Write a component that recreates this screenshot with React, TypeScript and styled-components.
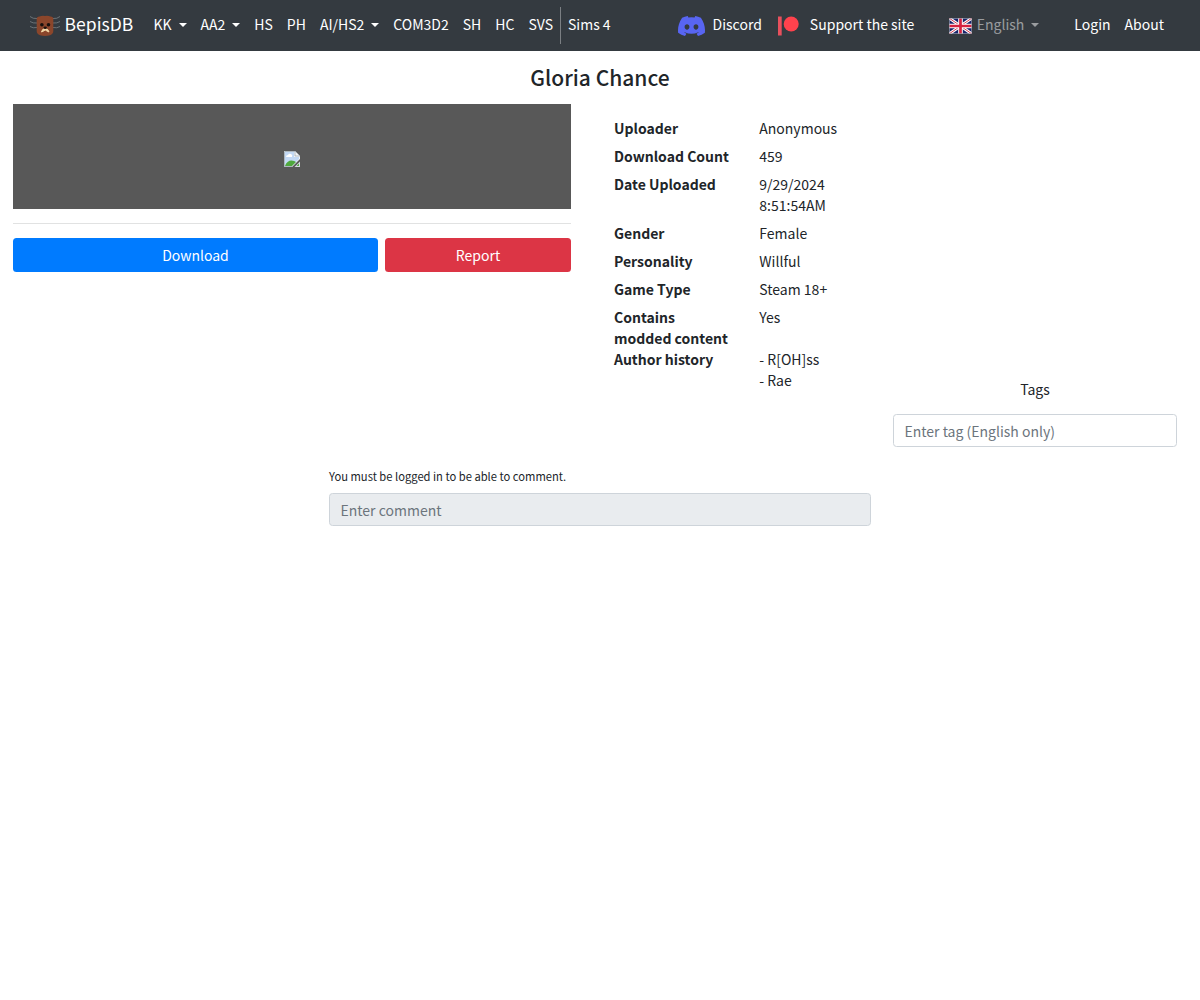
import React from 'react';
import styled, { createGlobalStyle } from 'styled-components';

const GlobalStyle = createGlobalStyle`
  html { font-size: 14px; }
  *, *::before, *::after { box-sizing: border-box; }
  body {
    margin: 0;
    background: #fff;
    color: #212529;
    font-family: "Noto Sans CJK JP", "Noto Sans CJK SC", "Noto Sans", sans-serif;
    font-size: 14px;
    line-height: 1.5;
  }
`;

const Navbar = styled.nav`
  display: flex;
  align-items: center;
  height: 51px;
  padding: 7px 29px;
  background: #343a40;
  white-space: nowrap;
`;

const Brand = styled.a`
  display: flex;
  align-items: center;
  gap: 5px;
  margin-left: 0.6px;
  margin-right: 13.3px;
  color: #fff;
  font-size: 17.5px;
  line-height: 26px;
  padding-bottom: 3px;
  svg { margin-top: 4px; }
`;

const NavGroup = styled.div<{ $end?: boolean }>`
  display: flex;
  align-items: center;
  margin-left: ${(p) => (p.$end ? 'auto' : '0')};
`;

const NavLink = styled.a<{ $muted?: boolean; $gap?: number; $after?: number }>`
  display: flex;
  align-items: center;
  gap: ${(p) => p.$gap ?? 0}px;
  margin-right: ${(p) => p.$after ?? 0}px;
  padding: 6px 7px 8px;
  color: ${(p) => (p.$muted ? 'rgba(255,255,255,.5)' : '#fff')};
  svg { flex: none; margin-top: 2px; }
`;

const Caret = styled.span`
  display: inline-block;
  vertical-align: 3px;
  margin-left: 7px;
  border-top: 4px solid currentColor;
  border-left: 4px solid transparent;
  border-right: 4px solid transparent;
`;

const Divider = styled.span`
  width: 1px;
  height: 37px;
  background: #7b7f83;
`;

const Title = styled.h4`
  margin: 13px 0 14px;
  font-size: 21px;
  font-weight: 500;
  line-height: 26px;
  text-align: center;
`;

const Columns = styled.main`
  display: grid;
  grid-template-columns: 558px 244px 284px;
  column-gap: 43px;
  padding: 0 13px;
`;

const Preview = styled.div`
  display: flex;
  align-items: center;
  justify-content: center;
  height: 105px;
  padding-top: 5px;
  background: #585858;
`;

const Rule = styled.hr`
  margin: 14px 0;
  border: 0;
  border-top: 1px solid #e1e2e2;
`;

const Actions = styled.div`
  display: grid;
  grid-template-columns: 365px 186px;
  gap: 7px;
`;

const Button = styled.button<{ $color: string }>`
  height: 34px;
  border: 0;
  border-radius: 3.5px;
  background: ${(p) => p.$color};
  color: #fff;
  font: inherit;
  padding: 1px 0 0;
`;

const Details = styled.dl`
  display: grid;
  grid-template-columns: 145.3px 98.7px;
  align-content: start;
  margin: 14px 0 0;
`;

const Term = styled.dt`
  font-weight: 700;
  padding-right: 28px;
`;

const Value = styled.dd`
  margin: 0 0 7px;
`;

const TagPanel = styled.section`
  display: flex;
  flex-direction: column;
  margin-left: -8px;
  width: 284px;
  padding-top: 275px;
`;

const TagHeading = styled.div`
  margin-bottom: 14px;
  text-align: center;
`;

const Field = styled.input`
  display: block;
  width: 100%;
  height: 33px;
  padding: 0 10.5px;
  border: 1px solid #ced4da;
  border-radius: 3.5px;
  background: #fff;
  font: inherit;
  &::placeholder { color: #6c757d; opacity: 1; }
  &:disabled { background: #e9ecef; }
`;

const Comments = styled.section`
  width: 542px;
  margin: 20px auto 0;
`;

const Notice = styled.small`
  display: block;
  margin-bottom: 8px;
  font-size: 11.2px;
  line-height: 18px;
`;

const BearLogo = () => (
  <svg width="30" height="24" viewBox="0 0 30 24">
    <g fill="none" stroke="#71787d" strokeWidth=".9">
      <path d="M0 2.500Q3 5 7 4.500M0 7.500Q3 9.500 7 9M0 12.500Q3 14.500 7 13.500M30 2.500Q27 5 23 4.500M30 7.500Q27 9.500 23 9M30 12.500Q27 14.500 23 13.500" />
    </g>
    <path d="M6.700 5Q6.700 2.500 9.500 2.500 12 1.500 15 2 18 1.500 20.500 2.500 23.300 2.500 23.300 5V17Q23.300 20 20 21.300 15 22.500 10 21.300 6.700 20 6.700 17Z" fill="#8b462b" />
    <circle cx="11.900" cy="10.800" r="1.800" fill="#17100e" />
    <circle cx="18.500" cy="10.800" r="1.800" fill="#17100e" />
    <path d="M11.500 18Q12 15 15.200 14.300 18.400 15 19 18L17 17 15.200 16 13.300 17.200Z" fill="#f3d7a5" stroke="#f3d7a5" strokeWidth="1" />
    <ellipse cx="15.200" cy="13.800" rx="1.700" ry="1.200" fill="#17100e" />
  </svg>
);

const DiscordLogo = () => (
  <svg width="27" height="20" viewBox="0 0 127.140 96.360" preserveAspectRatio="none">
    <path fill="#5865f2" d="M107.700 8.070A105.150 105.150 0 0 0 81.470 0a72.060 72.060 0 0 0-3.360 6.830 97.680 97.680 0 0 0-29.110 0A72.370 72.370 0 0 0 45.640 0a105.890 105.890 0 0 0-26.250 8.090C2.790 32.650-1.710 56.600.540 80.210a105.730 105.730 0 0 0 32.170 16.150 77.700 77.700 0 0 0 6.890-11.110 68.420 68.420 0 0 1-10.850-5.180c.910-.660 1.800-1.340 2.660-2a75.570 75.570 0 0 0 64.320 0c.870.710 1.760 1.390 2.660 2a68.680 68.680 0 0 1-10.870 5.190 77 77 0 0 0 6.890 11.100 105.250 105.250 0 0 0 32.190-16.140c2.640-27.380-4.510-51.110-18.900-72.150ZM42.450 65.690C36.180 65.690 31 60 31 53s5-12.740 11.430-12.740S54 46 53.890 53s-5.050 12.690-11.440 12.690Zm42.240 0C78.410 65.690 73.250 60 73.250 53s5-12.740 11.440-12.740S96.230 46 96.120 53s-5.040 12.690-11.430 12.690Z" />
  </svg>
);

const PatreonLogo = () => (
  <svg width="21" height="20" viewBox="0 0 21 20">
    <path d="M0 .500H3.700V19.500H0Z" fill="#e8505d" />
    <circle cx="13.200" cy="8" r="7.500" fill="#ff424d" />
  </svg>
);

const UnionFlag = () => (
  <svg width="23" height="16" viewBox="0 0 60 42" preserveAspectRatio="none">
    <path d="M0 0H60V42H0Z" fill="#17246b" />
    <path d="M0 0 60 42M60 0 0 42" stroke="#fff" strokeWidth="8" />
    <path d="M0 0 60 42M60 0 0 42" stroke="#cf3348" strokeWidth="2.500" />
    <path d="M30 0V42M0 21H60" stroke="#fff" strokeWidth="12" />
    <path d="M30 0V42M0 21H60" stroke="#d5213f" strokeWidth="7" />
    <path d="M1 1H59V41H1Z" fill="none" stroke="#9a9eaa" strokeWidth="2" />
  </svg>
);

const MissingImage = () => (
  <svg width="16" height="16" viewBox="0 0 16 16">
    <path d="M0 0H11L16 5V8L8 16H0Z" fill="#f1f4f6" />
    <path d="M1 1H10V6H15V8L8 15H1Z" fill="#c3d9f4" />
    <path d="M2 6Q2 4 4 4 5 2 7 3 9 4 8 6Z" fill="#fff" />
    <path d="M1 15Q3 9.500 7.500 9.500 10.500 9.500 12 11L8 15Z" fill="#4fa83d" />
    <path d="M11 0V5H16Z" fill="#f4f5f5" stroke="#9ba5ad" strokeWidth=".700" />
    <path d="M.5 16V.5H11" fill="none" stroke="#aeb8bf" />
    <path d="M0 15.500H8.500" stroke="#aeb8bf" />
    <path d="M10.500 16 16 10.500V16Z" fill="#d4dce0" />
    <path d="M12.500 15 15 12.500V15Z" fill="#54a543" />
  </svg>
);

const games = [
  { label: 'KK', menu: true },
  { label: 'AA2', menu: true },
  { label: 'HS' },
  { label: 'PH' },
  { label: 'AI/HS2', menu: true },
  { label: 'COM3D2' },
  { label: 'SH' },
  { label: 'HC' },
  { label: 'SVS' },
];

const details: [string, React.ReactNode][] = [
  ['Uploader', 'Anonymous'],
  ['Download Count', '459'],
  ['Date Uploaded', <>9/29/2024<br />8:51:54AM</>],
  ['Gender', 'Female'],
  ['Personality', 'Willful'],
  ['Game Type', 'Steam 18+'],
  ['Contains modded content', 'Yes'],
  ['Author history', <>- R[OH]ss<br />- Rae</>],
];

export default function App() {
  return (
    <>
      <GlobalStyle />
      <Navbar>
        <Brand><BearLogo />BepisDB</Brand>
        <NavGroup>
          {games.map((g) => (
            <NavLink key={g.label}>{g.label}{g.menu && <Caret />}</NavLink>
          ))}
          <Divider />
          <NavLink>Sims 4</NavLink>
        </NavGroup>
        <NavGroup $end>
          <NavLink $gap={8} $after={2}><DiscordLogo />Discord</NavLink>
          <NavLink $gap={11} $after={20.5}><PatreonLogo />Support the site</NavLink>
          <NavLink $muted $gap={5} $after={21}><UnionFlag /><span>English<Caret /></span></NavLink>
          <NavLink>Login</NavLink>
          <NavLink>About</NavLink>
        </NavGroup>
      </Navbar>
      <Title>Gloria Chance</Title>
      <Columns>
        <section>
          <Preview><MissingImage /></Preview>
          <Rule />
          <Actions>
            <Button $color="#007bff">Download</Button>
            <Button $color="#dc3545">Report</Button>
          </Actions>
        </section>
        <Details>
          {details.map(([term, value]) => (
            <React.Fragment key={term}>
              <Term>{term}</Term>
              <Value>{value}</Value>
            </React.Fragment>
          ))}
        </Details>
        <TagPanel>
          <TagHeading>Tags</TagHeading>
          <Field placeholder="Enter tag (English only)" />
        </TagPanel>
      </Columns>
      <Comments>
        <Notice>You must be logged in to be able to comment.</Notice>
        <Field disabled placeholder="Enter comment" />
      </Comments>
    </>
  );
}
